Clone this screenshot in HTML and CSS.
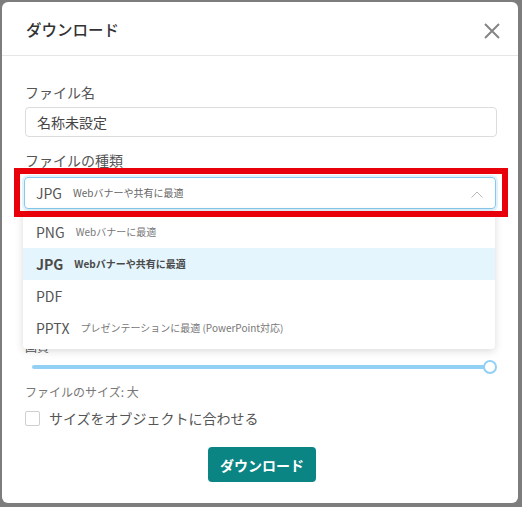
FILE: index.html
```html
<!DOCTYPE html>
<html lang="ja">
<head>
    <meta charset="UTF-8">
    <meta name="viewport" content="width=device-width, initial-scale=1.0">
    <title>ダウンロード</title>
    <link rel="stylesheet" href="styles.css">
</head>
<body>

    <div class="modal">
        <div class="modal-header">
            <h2>ダウンロード</h2>
            <button class="close" aria-label="閉じる">
                <svg width="16" height="16" viewBox="0 0 16 16">
                    <path d="M1 1L15 15M15 1L1 15" stroke="#858585" stroke-width="2" fill="none"/>
                </svg>
            </button>
        </div>

        <div class="modal-body">
            <label class="field-label" for="filename">ファイル名</label>
            <input class="text-input" type="text" id="filename" value="名称未設定">

            <div class="field-label type-label">ファイルの種類</div>
            <div class="select">
                <div class="select-box">
                    <span class="opt-name">JPG</span>
                    <span class="opt-desc">Webバナーや共有に最適</span>
                    <svg class="chevron" width="12" height="7" viewBox="0 0 12 7">
                        <polyline points="0.5,6.5 6,1 11.5,6.5" stroke="#b8b8b8" stroke-width="1" fill="none"/>
                    </svg>
                </div>
                <div class="highlight"></div>
                <ul class="options">
                    <li><span class="opt-name">PNG</span><span class="opt-desc">Webバナーに最適</span></li>
                    <li class="selected"><span class="opt-name">JPG</span><span class="opt-desc">Webバナーや共有に最適</span></li>
                    <li><span class="opt-name">PDF</span></li>
                    <li><span class="opt-name">PPTX</span><span class="opt-desc">プレゼンテーションに最適 (PowerPoint対応)</span></li>
                </ul>
            </div>

            <div class="quality-label">画質</div>
            <div class="slider">
                <div class="track"></div>
                <div class="thumb"></div>
            </div>
            <div class="size-note">ファイルのサイズ: 大</div>

            <label class="check-row">
                <span class="checkbox"></span>
                サイズをオブジェクトに合わせる
            </label>

            <div class="actions">
                <button class="download">ダウンロード</button>
            </div>
        </div>
    </div>

</body>
</html>
```

FILE: styles.css
```css
body {
    font-family: "Noto Sans CJK JP", "Noto Sans", sans-serif;
    background-color: #7d7d7d;
    color: #555;
    margin: 0;
    padding: 2px 4px 0 2px;
    height: 507px;
    box-sizing: border-box;
    overflow: hidden;
}
.modal {
    width: 516px;
    height: 501px;
    background-color: #fff;
    border-radius: 6px;
    box-sizing: border-box;
}
.modal-header {
    height: 54px;
    display: flex;
    align-items: center;
    justify-content: space-between;
    padding: 0 18px 0 24px;
    border-bottom: 1px solid #e6e6e6;
    box-sizing: border-box;
}
.modal-header h2 {
    margin: 0;
    font-size: 15.5px;
    font-weight: 500;
    color: #333;
    line-height: 22px;
}
.close {
    background: none;
    border: none;
    padding: 0;
    width: 16px;
    height: 16px;
    margin-top: 4px;
    cursor: pointer;
}
.close svg {
    display: block;
}
.modal-body {
    padding: 26px 21px 0 23px;
}
.field-label {
    display: block;
    font-size: 14px;
    line-height: 20px;
    color: #555;
    margin-bottom: 5px;
}
.text-input {
    display: block;
    width: 100%;
    height: 30px;
    box-sizing: border-box;
    border: 1px solid #dcdcdc;
    border-radius: 4px;
    padding: 0 11px;
    font-family: inherit;
    font-size: 14px;
    color: #444;
}
.type-label {
    margin-top: 13px;
    margin-bottom: 7px;
}
.select {
    position: relative;
    margin: 0 1px 0 -1px;
}
.select-box {
    height: 32px;
    box-sizing: border-box;
    border: 1px solid #86c8ee;
    border-radius: 4px;
    box-shadow: 0 0 0 2px rgba(140, 205, 240, 0.25);
    display: flex;
    align-items: center;
    padding: 0 12px 0 11px;
}
.opt-name {
    font-size: 14px;
    color: #555;
    line-height: 20px;
}
.opt-desc {
    font-size: 10px;
    color: #666;
    margin-left: 11px;
    line-height: 20px;
}
.chevron {
    margin-left: auto;
    margin-top: 2px;
}
.highlight {
    position: absolute;
    left: -10px;
    right: -12px;
    top: -9px;
    bottom: -8px;
    border: 6px solid #e8000b;
    z-index: 3;
    pointer-events: none;
}
.options {
    position: absolute;
    top: calc(100% + 2px);
    left: -1px;
    width: 472px;
    margin: 0;
    padding: 5px 0;
    list-style: none;
    background-color: #fff;
    border-radius: 4px;
    box-shadow: 0 2px 8px rgba(0, 0, 0, 0.15);
    z-index: 2;
}
.options li {
    height: 32px;
    display: flex;
    align-items: center;
    padding: 0 13px;
}
.options li .opt-desc {
    color: #777;
}
.options .selected {
    background-color: #e5f5fd;
}
.options .selected .opt-name,
.options .selected .opt-desc {
    font-weight: bold;
    color: #4a4a4a;
}
.quality-label {
    font-size: 12px;
    line-height: 16px;
    color: #555;
    margin-top: 130px;
}
.slider {
    position: relative;
    height: 28px;
    margin: -2px 0 0 7px;
}
.track {
    position: absolute;
    left: 0;
    right: 8px;
    top: 12px;
    height: 4px;
    background-color: #92d1f5;
    border-radius: 2px;
}
.thumb {
    position: absolute;
    right: 0;
    top: 7px;
    width: 14px;
    height: 14px;
    box-sizing: border-box;
    border: 2px solid #92d1f5;
    border-radius: 50%;
    background-color: #fff;
}
.size-note {
    font-size: 12px;
    line-height: 20px;
    color: #777;
    margin-top: 1px;
}
.check-row {
    display: flex;
    align-items: center;
    gap: 9px;
    margin-top: 6px;
    font-size: 14px;
    line-height: 20px;
    color: #555;
}
.checkbox {
    width: 15px;
    height: 15px;
    box-sizing: border-box;
    border: 1px solid #cfcfcf;
    border-radius: 2px;
}
.actions {
    display: flex;
    justify-content: center;
    margin-top: 19px;
}
.download {
    width: 108px;
    height: 35px;
    background-color: #0b8484;
    color: #fff;
    border: none;
    border-radius: 4px;
    font-family: inherit;
    font-size: 14px;
    font-weight: bold;
    cursor: pointer;
    margin-left: 2px;
}
```
